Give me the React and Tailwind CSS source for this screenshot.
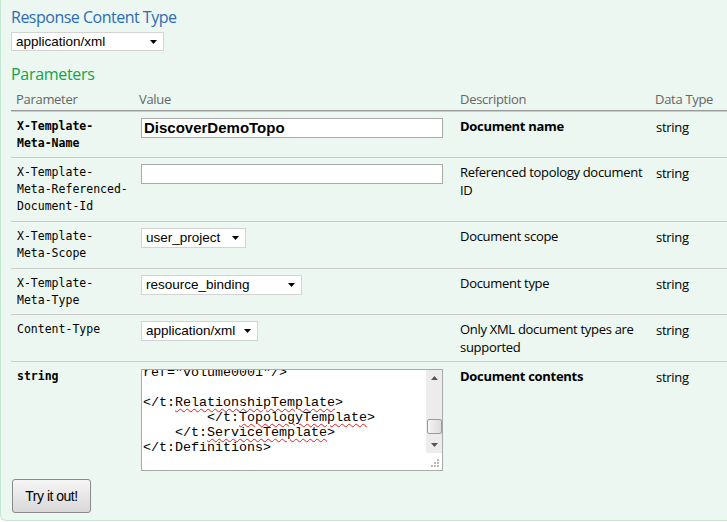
import React from "react";

const sans = { fontFamily: '"Open Sans", "DejaVu Sans", sans-serif' };

function Arrow() {
  return (
    <svg width="7" height="4" viewBox="0 0 7 4" className="ml-auto mr-[6px] shrink-0">
      <path d="M0 0 L7 0 L3.5 4 Z" fill="#000" />
    </svg>
  );
}

function Select({ w, h = "h-[20px]", children }) {
  return (
    <div
      className={`flex items-center ${w} ${h} bg-white border border-[#d3d3d3] pl-[4px] text-[13.5px] text-black leading-none`}
      style={{ fontFamily: '"Liberation Sans", Arial, sans-serif' }}
    >
      <span>{children}</span>
      <Arrow />
    </div>
  );
}

function Row({ h, param, bold, value, desc, descBold, top }) {
  return (
    <div className={`flex ${h} ${top ? "border-t" : ""} border-b border-[#cccccc]`}>
      <div
        className={`w-[128px] pl-[6px] pt-[6px] text-[11.5px] leading-[17px] text-black ${bold ? "font-bold" : ""}`}
        style={{ fontFamily: '"DejaVu Sans Mono", monospace' }}
      >
        {param}
      </div>
      <div className="w-[320px] pl-[2px] pt-[6px]">{value}</div>
      <div className={`w-[195px] pl-[1px] pt-[5px] text-[13px] leading-[18px] tracking-[-0.3px] text-black ${descBold ? "font-bold" : ""}`}>
        {desc}
      </div>
      <div className="flex-1 pl-[2px] pt-[6px] text-[13px] leading-[18px] tracking-[-0.3px] text-black">string</div>
    </div>
  );
}

function TextInput({ value }) {
  return (
    <div
      className="w-[302px] h-[20px] bg-white border border-[#a9a9a9] pl-[2px] flex items-center text-[15px] font-bold text-black"
      style={{ fontFamily: '"Liberation Sans", Arial, sans-serif' }}
    >
      {value}
    </div>
  );
}

function TextArea() {
  const sq = "underline decoration-wavy decoration-[#e02020] decoration-1 underline-offset-[2px]";
  return (
    <div className="relative w-[302px] h-[102px] bg-white border border-[#a9a9a9] overflow-hidden">
      <div
        className="mt-[-5px] pl-[1px] text-[13.33px] leading-[15px] text-black whitespace-pre"
        style={{ fontFamily: '"Liberation Mono", "Courier New", monospace' }}
      >
        <div>{'ref="volume0001"/>'}</div>
        <div>{" "}</div>
        <div>
          {"</t:"}
          <span className={sq}>RelationshipTemplate</span>
          {">"}
        </div>
        <div>
          {"        </t:"}
          <span className={sq}>TopologyTemplate</span>
          {">"}
        </div>
        <div>
          {"    </t:"}
          <span className={sq}>ServiceTemplate</span>
          {">"}
        </div>
        <div>{"</t:Definitions>"}</div>
      </div>
      {/* scrollbar */}
      <div className="absolute right-0 top-0 w-[16px] h-[83px] bg-[#ececec] flex flex-col items-center">
        <div className="h-[16px] flex items-center justify-center">
          <svg width="7" height="4" viewBox="0 0 7 4">
            <path d="M0 4 L7 4 L3.5 0 Z" fill="#555" />
          </svg>
        </div>
        <div className="mt-[33px] w-[15px] h-[15px] rounded-[2px] border border-[#9a9a9a] bg-gradient-to-r from-[#f4f4f4] to-[#dcdcdc]" />
        <div className="mt-auto h-[16px] flex items-center justify-center">
          <svg width="7" height="4" viewBox="0 0 7 4">
            <path d="M0 0 L7 0 L3.5 4 Z" fill="#555" />
          </svg>
        </div>
      </div>
      {/* resize grip */}
      <svg width="10" height="10" viewBox="0 0 10 10" className="absolute right-[2px] bottom-[2px]">
        <rect x="7" y="1" width="2" height="2" fill="#bbb" />
        <rect x="4" y="4" width="2" height="2" fill="#bbb" />
        <rect x="7" y="4" width="2" height="2" fill="#bbb" />
        <rect x="1" y="7" width="2" height="2" fill="#bbb" />
        <rect x="4" y="7" width="2" height="2" fill="#bbb" />
        <rect x="7" y="7" width="2" height="2" fill="#bbb" />
      </svg>
    </div>
  );
}

export default function App() {
  return (
    <div className="w-[727px] h-[522px] bg-white overflow-hidden" style={sans}>
      <div className="h-[521px] bg-[#ebf7f0] border-l border-b border-[#c3e8d1] rounded-bl-[6px] pl-[10px] pt-[6px]">
        <h4 className="text-[16px] leading-[22px] tracking-[-0.5px] text-[#2c6db5] font-normal">Response Content Type</h4>
        <div className="mt-[4px]">
          <Select w="w-[153px]" h="h-[19px]">application/xml</Select>
        </div>
        <h4 className="mt-[12px] text-[16px] leading-[22px] tracking-[-0.3px] text-[#10a54a] font-normal">Parameters</h4>
        <div className="mt-[6px]">
          <div className="flex h-[20px] border-b border-[#999999] text-[13px] leading-[17px] tracking-[-0.3px] text-[#666666]">
            <div className="w-[128px] pl-[5px]">Parameter</div>
            <div className="w-[320px]">Value</div>
            <div className="w-[195px] pl-[1px]">Description</div>
            <div className="flex-1 pl-[1px]">Data Type</div>
          </div>
          <Row
            top
            h="h-[47px]"
            bold
            param={<>X-Template-<br />Meta-Name</>}
            value={<TextInput value="DiscoverDemoTopo" />}
            desc="Document name"
            descBold
          />
          <Row
            h="h-[64px]"
            param={<>X-Template-<br />Meta-Referenced-<br />Document-Id</>}
            value={<TextInput value="" />}
            desc={<>Referenced topology document<br />ID</>}
          />
          <Row
            h="h-[47px]"
            param={<>X-Template-<br />Meta-Scope</>}
            value={<Select w="w-[105px]">user_project</Select>}
            desc="Document scope"
          />
          <Row
            h="h-[46px]"
            param={<>X-Template-<br />Meta-Type</>}
            value={<Select w="w-[161px]">resource_binding</Select>}
            desc="Document type"
          />
          <Row
            h="h-[47px]"
            param="Content-Type"
            value={<Select w="w-[117px]">application/xml</Select>}
            desc={<>Only XML document types are<br />supported</>}
          />
          <div className="flex">
            <div
              className="w-[128px] pl-[6px] pt-[6px] text-[11.5px] leading-[17px] font-bold text-black"
              style={{ fontFamily: '"DejaVu Sans Mono", monospace' }}
            >
              string
            </div>
            <div className="w-[320px] pl-[2px] pt-[7px]">
              <TextArea />
            </div>
            <div className="w-[195px] pl-[1px] pt-[5px] text-[13px] leading-[18px] tracking-[-0.3px] font-bold text-black">Document contents</div>
            <div className="flex-1 pl-[2px] pt-[6px] text-[13px] leading-[18px] tracking-[-0.3px] text-black">string</div>
          </div>
        </div>
        <button
          className="mt-[8px] ml-[1px] w-[79px] h-[34px] rounded-[3px] border border-[#8a8a8a] bg-gradient-to-b from-[#f6f6f6] to-[#d8d8d8] text-[14px] tracking-[-0.5px] text-black"
          style={{ fontFamily: '"Liberation Sans", Arial, sans-serif' }}
        >
          Try it out!
        </button>
      </div>
    </div>
  );
}
